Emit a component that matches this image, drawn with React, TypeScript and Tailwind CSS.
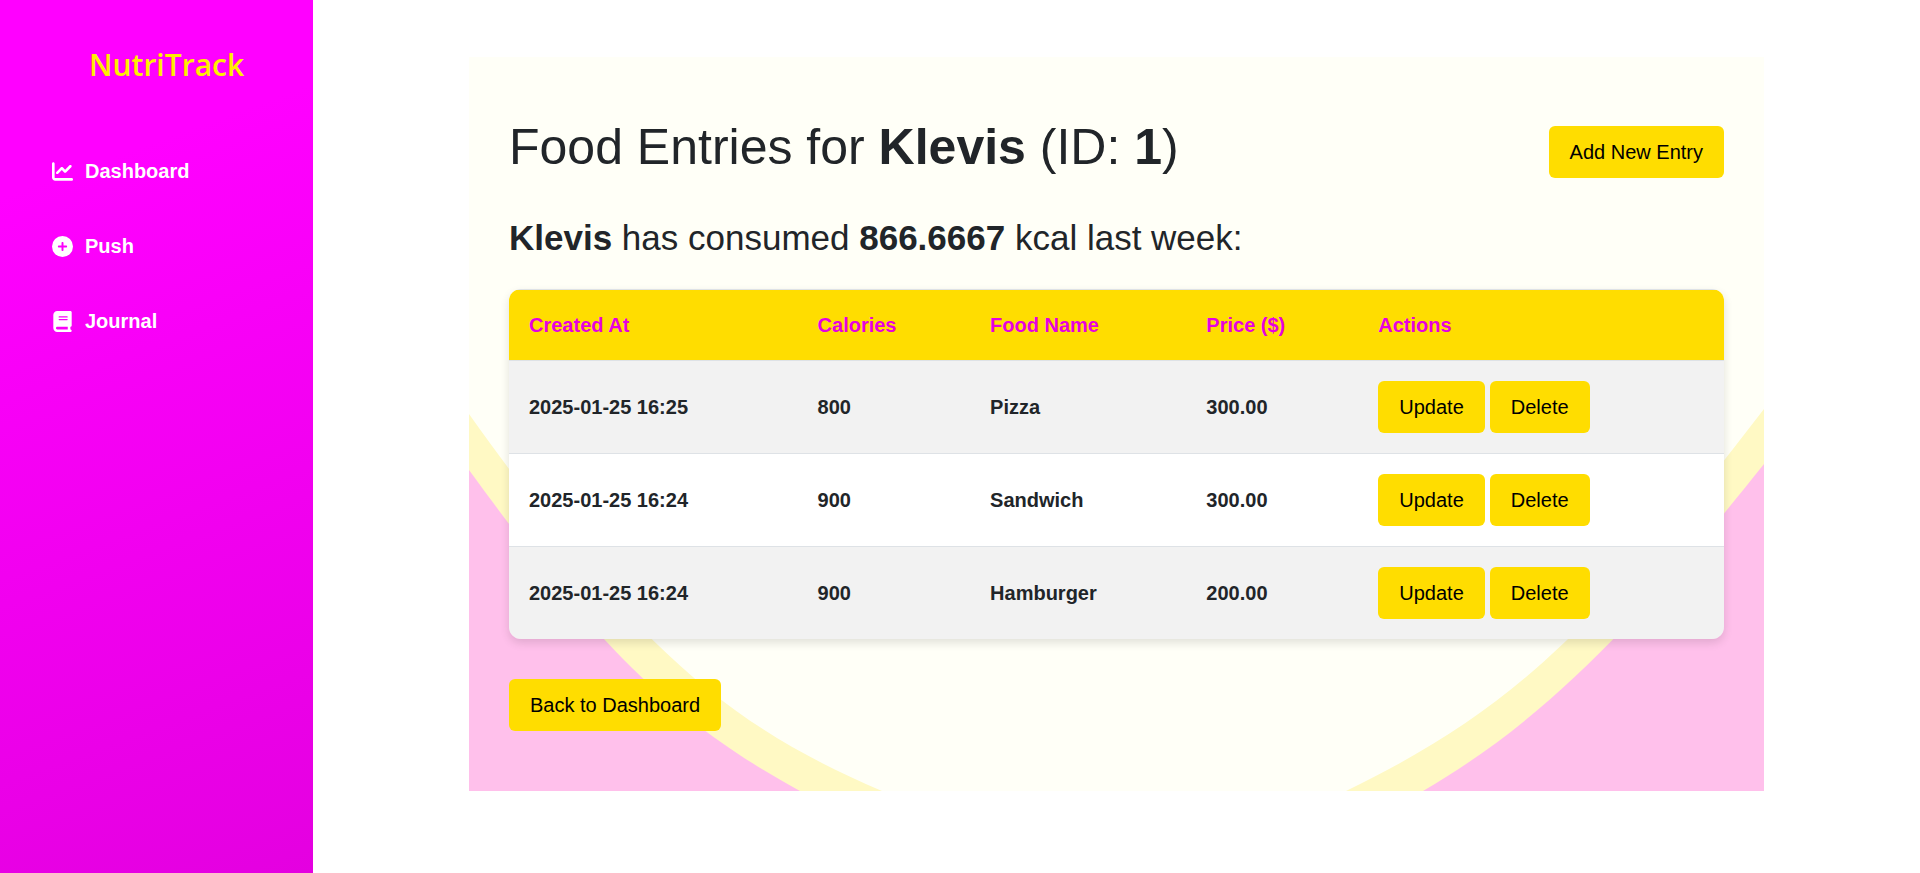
import { FaBook, FaChartLine, FaCirclePlus } from "react-icons/fa6";

function Backdrop() {
  return (
    <svg
      aria-hidden="true"
      className="absolute inset-0 -z-10 h-full w-full"
      viewBox="0 0 1295 734"
      preserveAspectRatio="none"
    >
      <rect width="1295" height="734" fill="#fffff7" />
      <path d="M0 357 C162 584 253 666 413 734 L0 734 Z" fill="#fff9c4" />
      <path d="M1295 352 C1126 572 1044 653 877 734 L1295 734 Z" fill="#fff9c4" />
      <path d="M0 413 C129 590 202 663 331 734 L0 734 Z" fill="#ffc0eb" />
      <path d="M1295 407 C1169 565 1079 661 954 734 L1295 734 Z" fill="#ffc0eb" />
    </svg>
  );
}

const navItems = [
  { label: "Dashboard", Icon: FaChartLine },
  { label: "Push", Icon: FaCirclePlus },
  { label: "Journal", Icon: FaBook },
];

const entries = [
  { createdAt: "2025-01-25 16:25", calories: "800", food: "Pizza", price: "300.00" },
  { createdAt: "2025-01-25 16:24", calories: "900", food: "Sandwich", price: "300.00" },
  { createdAt: "2025-01-25 16:24", calories: "900", food: "Hamburger", price: "200.00" },
];

const buttonClass =
  "inline-block rounded-md bg-[#ffdd00] px-[21px] py-[11px] text-xl leading-[30px] font-normal text-black hover:bg-[#f2d200]";

export default function App() {
  return (
    <div className="flex min-h-screen bg-white font-['Liberation_Sans',Arial,sans-serif] text-xl leading-[30px] text-[#212529]">
      <aside className="w-[313px] shrink-0 bg-[linear-gradient(160deg,#ff00ff_0%,#ff00ff_20%,#e400e0_100%)] px-5 pt-[41px] text-white">
        <a
          href="#"
          className="block pl-[69px] font-['Open_Sans','Noto_Sans',sans-serif] text-[30px] leading-12 font-semibold text-[#ffee00]"
        >
          NutriTrack
        </a>
        <nav className="mt-13">
          <ul className="flex flex-col gap-[15px]">
            {navItems.map(({ label, Icon }) => (
              <li key={label}>
                <a href="#" className="flex items-center gap-3 px-8 py-[15px] font-bold">
                  <Icon className="h-[21px] w-[21px] shrink-0" />
                  {label}
                </a>
              </li>
            ))}
          </ul>
        </nav>
      </aside>

      <main className="min-w-0 flex-1 px-[156px] pt-[57px] pb-[82px]">
        <section className="relative isolate px-10 pt-15 pb-15">
          <Backdrop />
          <header className="flex items-end justify-between">
            <h1 className="pb-px text-[50px] leading-15">
              Food Entries for <strong>Klevis</strong> (ID: <strong>1</strong>)
            </h1>
            <button type="button" className={buttonClass}>
              Add New Entry
            </button>
          </header>

          <h2 className="mt-[38px] text-[35px] leading-11">
            <strong>Klevis</strong> has consumed <strong>866.6667</strong> kcal last week:
          </h2>

          <div className="mt-[29px] overflow-hidden rounded-xl shadow-[0_4px_10px_rgba(0,0,0,0.12)]">
            <table className="w-full table-fixed border-collapse text-left font-bold">
              <colgroup>
                <col className="w-[23.75%]" />
                <col className="w-[14.2%]" />
                <col className="w-[17.8%]" />
                <col className="w-[14.15%]" />
                <col />
              </colgroup>
              <thead>
                <tr className="border-y border-[#dee2e6] bg-[#ffdd00] text-[#e600e0]">
                  {["Created At", "Calories", "Food Name", "Price ($)", "Actions"].map((title) => (
                    <th key={title} scope="col" className="px-5 py-5">
                      {title}
                    </th>
                  ))}
                </tr>
              </thead>
              <tbody>
                {entries.map((entry, index) => (
                  <tr key={index} className="border-b border-[#dee2e6] bg-white last:border-b-0 odd:bg-[#f2f2f2]">
                    <td className="px-5 py-5">{entry.createdAt}</td>
                    <td className="px-5 py-5">{entry.calories}</td>
                    <td className="px-5 py-5">{entry.food}</td>
                    <td className="px-5 py-5">{entry.price}</td>
                    <td className="px-5 py-5">
                      <div className="flex gap-[5px]">
                        <button type="button" className={buttonClass}>
                          Update
                        </button>
                        <button type="button" className={buttonClass}>
                          Delete
                        </button>
                      </div>
                    </td>
                  </tr>
                ))}
              </tbody>
            </table>
          </div>

          <a href="#" className={`${buttonClass} mt-10`}>
            Back to Dashboard
          </a>
        </section>
      </main>
    </div>
  );
}
